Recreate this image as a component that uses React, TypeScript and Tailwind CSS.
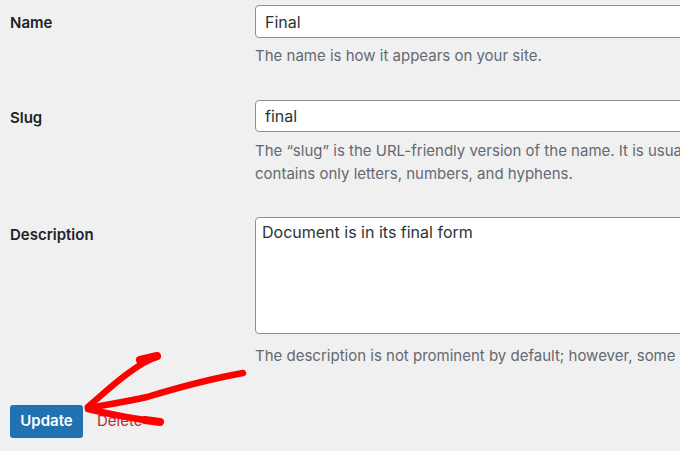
const font = "font-['Inter','Liberation_Sans',sans-serif]";

const Arrow = () => (
  <svg
    className="absolute left-0 top-0 pointer-events-none"
    width="680"
    height="451"
    viewBox="0 0 680 451"
  >
    <g fill="none" stroke="#ff0000" strokeLinecap="round" strokeLinejoin="round">
      <path d="M157 357 C 140 362, 118 380, 88 407" strokeWidth="6.5" />
      <path d="M140 360 L 157 356" strokeWidth="8" />
      <path d="M243 373 C 215 378, 180 387, 147 397 C 125 402, 105 405, 88 408" strokeWidth="6.5" />
      <path d="M88 409 C 105 413, 125 418, 160 422" strokeWidth="6.5" />
      <path d="M145 420 L 160 422" strokeWidth="8" />
    </g>
  </svg>
);

export default function App() {
  return (
    <div className={`relative w-[680px] h-[451px] overflow-hidden bg-[#f0f0f1] ${font}`}>
      <div className="flex flex-col pt-[5px]">
        {/* Name */}
        <div className="flex">
          <div className="w-[255px] shrink-0 pl-[10px] pt-[7px] text-[15px] font-semibold text-[#1d2327]">
            Name
          </div>
          <div className="shrink-0">
            <input
              readOnly
              value="Final"
              className="block w-[520px] h-[33px] rounded-[4px] border border-[#8c8f94] bg-white px-[9px] text-[16px] text-[#2c3338]"
            />
            <p className="mt-[6px] text-[15px] leading-[23px] text-[#646970]">
              The name is how it appears on your site.
            </p>
          </div>
        </div>

        {/* Slug */}
        <div className="flex mt-[33px]">
          <div className="w-[255px] shrink-0 pl-[10px] pt-[7px] text-[15px] font-semibold text-[#1d2327]">
            Slug
          </div>
          <div className="shrink-0">
            <input
              readOnly
              value="final"
              className="block w-[520px] h-[32px] rounded-[4px] border border-[#8c8f94] bg-white px-[9px] text-[16px] text-[#2c3338]"
            />
            <p className="mt-[7px] whitespace-nowrap text-[15px] leading-[23px] text-[#646970]">
              The “slug” is the URL-friendly version of the name. It is usually all lowercase and
              <br />
              contains only letters, numbers, and hyphens.
            </p>
          </div>
        </div>

        {/* Description */}
        <div className="flex mt-[32px]">
          <div className="w-[255px] shrink-0 pl-[10px] pt-[7px] text-[15px] font-semibold text-[#1d2327]">
            Description
          </div>
          <div className="shrink-0">
            <div className="w-[520px] h-[117px] rounded-[4px] border border-[#8c8f94] bg-white px-[6px] pt-[2px] text-[16px] leading-[24px] text-[#2c3338]">
              Document is in its final form
            </div>
            <p className="mt-[10px] whitespace-nowrap text-[15px] leading-[23px] text-[#646970]">
              The description is not prominent by default; however, some themes may show it.
            </p>
          </div>
        </div>

        {/* Actions */}
        <div className="flex items-center gap-[14px] mt-[38px] pl-[10px]">
          <button className="h-[33px] w-[73px] rounded-[3px] bg-[#2271b1] text-[15px] font-semibold text-white">
            Update
          </button>
          <span className="text-[15px] text-[#b32d2e]">Delete</span>
        </div>
      </div>
      <Arrow />
    </div>
  );
}
